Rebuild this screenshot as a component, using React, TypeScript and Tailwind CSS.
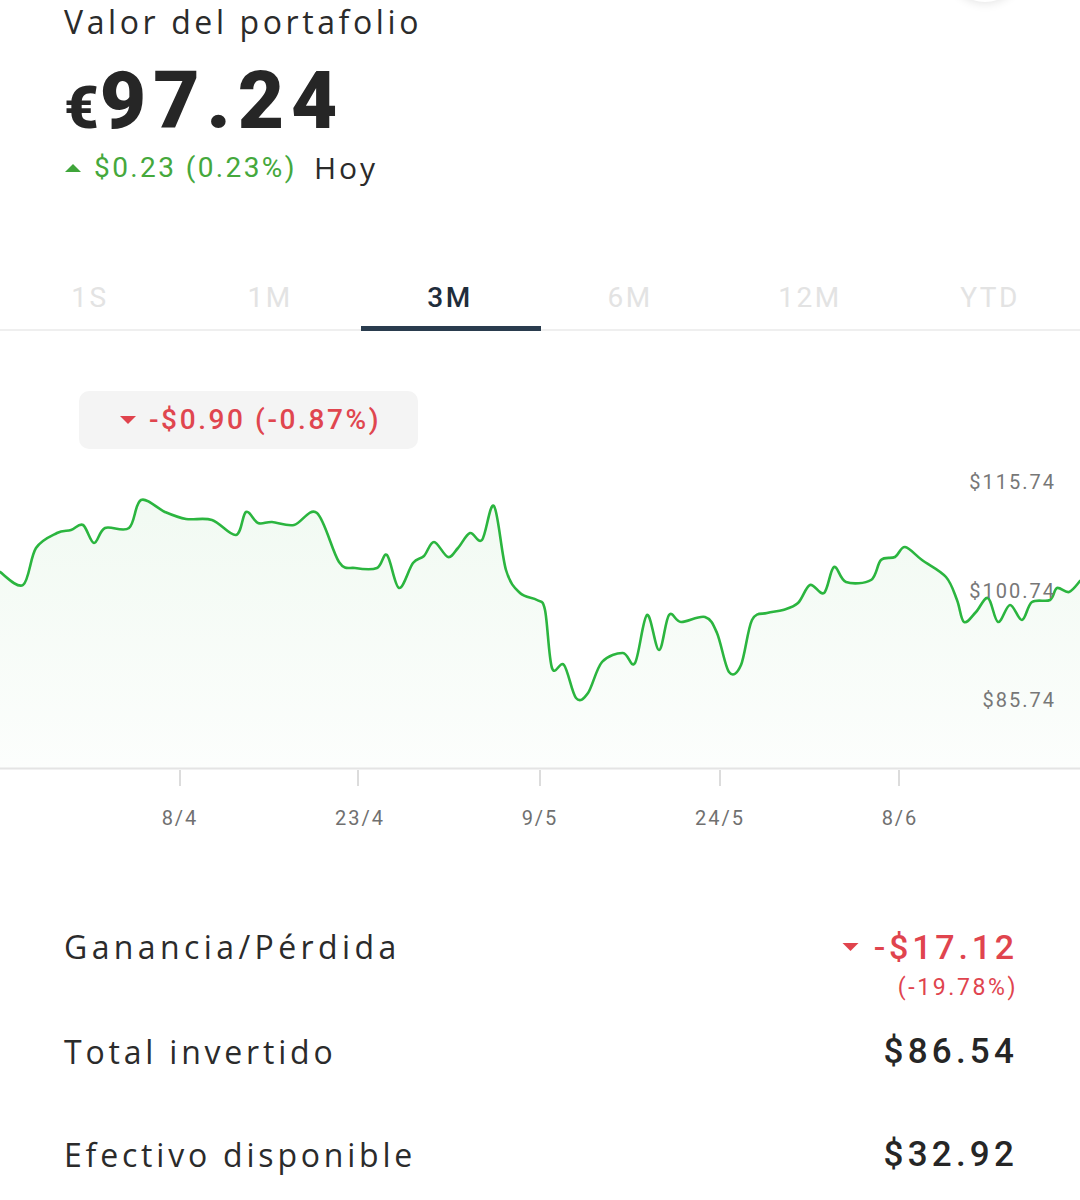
import React from "react";

const pts: [number, number][] = [
  [0, 572], [23, 585], [36, 548], [57, 533], [71, 530], [83, 525], [94, 543], [105, 528],
  [129, 528], [141, 500], [165, 512], [186, 519], [212, 520], [236, 535], [246, 512],
  [258, 523], [272, 522], [294, 525], [317, 513], [339, 562], [355, 568], [377, 568],
  [387, 555], [399, 588], [413, 563], [424, 556], [434, 542], [448, 557], [458, 548],
  [470, 533], [482, 540], [494, 506], [506, 570], [520, 593], [537, 600], [545, 610],
  [552, 668], [564, 665], [576, 698], [588, 693], [602, 662], [623, 653], [635, 663],
  [647, 615], [659, 650], [669, 615], [681, 622], [705, 617], [717, 633], [729, 672],
  [741, 665], [752, 620], [767, 613], [783, 610], [798, 603], [810, 585], [824, 593],
  [834, 567], [846, 582], [871, 580], [881, 560], [895, 557], [905, 547], [922, 560],
  [946, 577], [957, 600], [964, 622], [976, 612], [988, 598], [998, 622], [1010, 605],
  [1022, 620], [1032, 602], [1050, 600], [1057, 588], [1069, 592], [1080, 581],
];

const TOP = 460;

function buildPath(p: [number, number][]) {
  const q = p.map(([x, y]) => [x, y - TOP] as [number, number]);
  let d = `M${q[0][0]},${q[0][1]}`;
  for (let i = 0; i < q.length - 1; i++) {
    const p0 = q[i - 1] || q[i];
    const p1 = q[i];
    const p2 = q[i + 1];
    const p3 = q[i + 2] || p2;
    const c1x = p1[0] + (p2[0] - p0[0]) / 6;
    const c1y = p1[1] + (p2[1] - p0[1]) / 6;
    const c2x = p2[0] - (p3[0] - p1[0]) / 6;
    const c2y = p2[1] - (p3[1] - p1[1]) / 6;
    d += ` C${c1x.toFixed(1)},${c1y.toFixed(1)} ${c2x.toFixed(1)},${c2y.toFixed(1)} ${p2[0]},${p2[1]}`;
  }
  return d;
}

const linePath = buildPath(pts);
const fillPath = `${linePath} L1080,308 L0,308 Z`;

const tabs = ["1S", "1M", "3M", "6M", "12M", "YTD"];
const dates = ["8/4", "23/4", "9/5", "24/5", "8/6"];

function TriUp({ className }: { className: string }) {
  return (
    <svg width="18" height="10" viewBox="0 0 18 10" className={className}>
      <path d="M9 1 L17 9 L1 9 Z" fill="currentColor" />
    </svg>
  );
}
function TriDown({ className }: { className: string }) {
  return (
    <svg width="18" height="10" viewBox="0 0 18 10" className={className}>
      <path d="M1 1 L17 1 L9 9 Z" fill="currentColor" />
    </svg>
  );
}

export default function App() {
  return (
    <div className="relative w-[1080px] h-[1200px] overflow-hidden bg-white font-['Open_Sans',sans-serif]">
      <div className="absolute left-[947px] top-[-74px] w-[76px] h-[76px] rounded-full bg-white shadow-[0_2px_10px_rgba(0,0,0,0.10)]" />

      {/* Header */}
      <div className="pl-[64px]">
        <div className="text-[32px] leading-[44px] tracking-[3.6px] text-[#2b2b2b]">Valor del portafolio</div>
        <div className="mt-[17px] flex items-baseline h-[80px] leading-[80px] font-['Roboto',sans-serif] font-black text-[#262626]">
          <span className="text-[60px] tracking-[1px]">€</span>
          <span className="text-[80px] tracking-[7px]">97.24</span>
        </div>
        <div className="mt-[9px] flex items-center h-[36px]">
          <TriUp className="text-[#3fa53a] mr-[12px] w-[18px] h-[10px]" />
          <span className="font-['Roboto',sans-serif] text-[28px] leading-[36px] tracking-[2.4px] text-[#45a83c]">$0.23 (0.23%)</span>
          <span className="ml-[17px] text-[30px] leading-[36px] tracking-[3px] text-[#2b2b2b]">Hoy</span>
        </div>
      </div>

      {/* Tabs */}
      <div className="mt-[81px] flex border-b-2 border-[#efefef]">
        {tabs.map((t) => {
          const active = t === "3M";
          return (
            <div key={t} className="relative w-[180px] h-[62px] flex items-center justify-center">
              <span
                className={
                  "font-['Roboto',sans-serif] text-[28px] tracking-[2.5px] " +
                  (active ? "font-medium text-[#1f2d3b]" : "text-[#e3e3e3]")
                }
              >
                {t}
              </span>
              {active && <div className="absolute left-[1px] right-[-1px] bottom-[-2px] h-[5px] bg-[#2a3c4e]" />}
            </div>
          );
        })}
      </div>

      {/* Badge */}
      <div className="mt-[60px] ml-[79px] w-[339px] h-[58px] rounded-[10px] bg-[#f4f4f4] flex items-center pl-[40px]">
        <TriDown className="text-[#e0434d] mr-[12px] w-[18px] h-[10px]" />
        <span className="font-['Roboto',sans-serif] font-medium text-[28px] tracking-[2.6px] text-[#e0464f]">-$0.90 (-0.87%)</span>
      </div>

      {/* Chart */}
      <div className="relative mt-[11px] h-[330px]">
        <svg width="1080" height="330" viewBox="0 0 1080 330" className="block">
          <defs>
            <linearGradient id="g" x1="0" y1="0" x2="0" y2="1">
              <stop offset="0%" stopColor="#3cb44a" stopOpacity="0.07" />
              <stop offset="100%" stopColor="#3cb44a" stopOpacity="0.015" />
            </linearGradient>
          </defs>
          <path d={fillPath} fill="url(#g)" />
          <path d={linePath} fill="none" stroke="#2bb53f" strokeWidth="2.6" strokeLinejoin="round" strokeLinecap="round" />
          <line x1="0" y1="308.5" x2="1080" y2="308.5" stroke="#e4e4e4" strokeWidth="2" />
          {[180, 358, 540, 720, 899].map((x) => (
            <line key={x} x1={x} y1="310" x2={x} y2="326" stroke="#dcdcdc" strokeWidth="2" />
          ))}
        </svg>
        <div className="absolute right-[24px] top-[10px] font-['Roboto',sans-serif] text-[20px] leading-[24px] tracking-[2px] text-[#777777]">$115.74</div>
        <div className="absolute right-[24px] top-[119px] font-['Roboto',sans-serif] text-[20px] leading-[24px] tracking-[2px] text-[#777777]">$100.74</div>
        <div className="absolute right-[24px] top-[228px] font-['Roboto',sans-serif] text-[20px] leading-[24px] tracking-[2px] text-[#777777]">$85.74</div>
      </div>

      {/* Date labels */}
      <div className="mt-[14px] flex pl-[90px]">
        {dates.map((d) => (
          <div key={d} className="w-[180px] text-center font-['Roboto',sans-serif] text-[20px] leading-[28px] tracking-[2px] text-[#707070]">
            {d}
          </div>
        ))}
      </div>

      {/* Rows */}
      <div className="mt-[93px] flex justify-between pl-[64px] pr-[62px]">
        <div className="text-[32px] leading-[44px] tracking-[4.4px] text-[#2b2b2b]">Ganancia/Pérdida</div>
        <div className="flex flex-col items-end">
          <div className="flex items-center h-[44px]">
            <TriDown className="text-[#e0434d] mr-[14px] w-[19px] h-[10px]" />
            <span className="font-['Roboto',sans-serif] font-medium text-[34px] leading-[44px] tracking-[3.8px] text-[#e0444e]">-$17.12</span>
          </div>
          <div className="mt-[4px] font-['Roboto',sans-serif] text-[23px] leading-[30px] tracking-[2.6px] text-[#e0444e]">(-19.78%)</div>
        </div>
      </div>

      <div className="mt-[27px] flex justify-between items-center pl-[64px] pr-[62px]">
        <div className="text-[32px] leading-[44px] tracking-[3.8px] text-[#2b2b2b]">Total invertido</div>
        <div className="font-['Roboto',sans-serif] font-medium text-[35px] leading-[44px] tracking-[4.2px] text-[#262626]">$86.54</div>
      </div>

      <div className="mt-[59px] flex justify-between items-center pl-[64px] pr-[62px]">
        <div className="text-[32px] leading-[44px] tracking-[3.8px] text-[#2b2b2b]">Efectivo disponible</div>
        <div className="font-['Roboto',sans-serif] font-medium text-[35px] leading-[44px] tracking-[4.2px] text-[#262626]">$32.92</div>
      </div>
    </div>
  );
}
